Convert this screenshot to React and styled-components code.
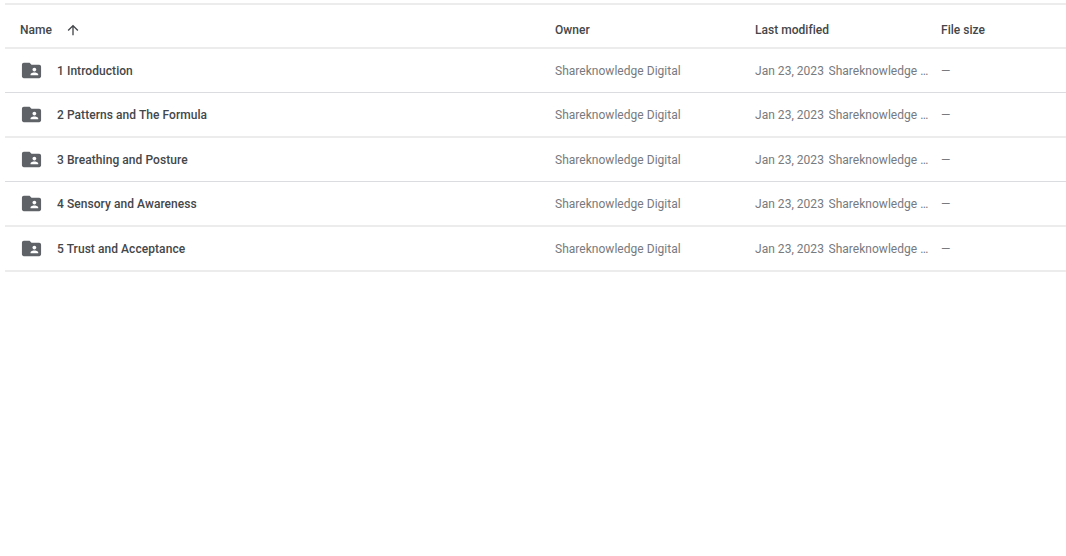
import React from "react";
import styled, { createGlobalStyle } from "styled-components";

const GlobalStyle = createGlobalStyle`
  html, body {
    margin: 0;
    padding: 0;
    background: #fff;
  }
  body {
    font-family: Roboto, "Liberation Sans", sans-serif;
  }
`;

const Page = styled.main`
  height: 556px;
  padding-top: 3px;
  box-sizing: border-box;
  overflow: hidden;
`;

const Table = styled.section`
  margin-left: 5px;
  border-top: 2px solid #ececec;
`;

const Row = styled.div`
  display: grid;
  grid-template-columns: 550px 200px 186px 1fr;
  align-items: center;
  box-sizing: border-box;
  height: ${(p) => (p.$soft ? "45px" : "44px")};
  border-bottom: ${(p) => (p.$soft ? "2px solid #ececec" : "1px solid #dadce0")};
`;

const HeaderRow = styled(Row)`
  height: 44px;
  padding-top: 7px;
`;

const HeaderCell = styled.div`
  display: flex;
  align-items: center;
  padding-left: ${(p) => (p.$first ? "15px" : "0")};
  font-size: 12px;
  font-weight: 500;
  letter-spacing: 0.03px;
  color: #44474a;
`;

const SortIcon = styled.svg`
  width: 16px;
  height: 16px;
  margin-left: 13px;
  fill: #44474a;
`;

const NameCell = styled.div`
  display: flex;
  align-items: center;
  padding-left: 15px;
  font-size: 12px;
  font-weight: 500;
  letter-spacing: 0.06px;
  color: #44474a;
`;

const FolderIcon = styled.svg`
  width: 23px;
  height: 23px;
  margin-right: 14px;
  fill: #5f6368;
`;

const MutedCell = styled.div`
  display: flex;
  font-size: 12px;
  letter-spacing: 0.03px;
  color: #777a7e;
`;

const ModifiedDate = styled.span`
  width: 73.5px;
  flex: none;
`;

const ModifiedBy = styled.span`
  width: 101px;
  overflow: hidden;
  white-space: nowrap;
  text-overflow: ellipsis;
`;

const folders = [
  { name: "1 Introduction", soft: false },
  { name: "2 Patterns and The Formula", soft: true },
  { name: "3 Breathing and Posture", soft: false },
  { name: "4 Sensory and Awareness", soft: true },
  { name: "5 Trust and Acceptance", soft: true },
];

const App = () => {
  return (
    <Page>
      <GlobalStyle />
      <Table>
        <HeaderRow $soft>
          <HeaderCell $first>
            Name
            <SortIcon viewBox="0 0 24 24">
              <path d="M4 12l1.41 1.41L11 7.83V20h2V7.83l5.58 5.59L20 12l-8-8-8 8z" />
            </SortIcon>
          </HeaderCell>
          <HeaderCell>Owner</HeaderCell>
          <HeaderCell>Last modified</HeaderCell>
          <HeaderCell>File size</HeaderCell>
        </HeaderRow>
        {folders.map(({ name, soft }) => (
          <Row key={name} $soft={soft}>
            <NameCell>
              <FolderIcon viewBox="0 0 24 24">
                <path d="M20 6h-8l-2-2H4c-1.1 0-1.99.9-1.99 2L2 18c0 1.1.9 2 2 2h16c1.1 0 2-.9 2-2V8c0-1.1-.9-2-2-2zm-5 3c1.1 0 2 .9 2 2s-.9 2-2 2-2-.9-2-2 .9-2 2-2zm4 8h-8v-1c0-1.33 2.67-2 4-2s4 .67 4 2v1z" />
              </FolderIcon>
              {name}
            </NameCell>
            <MutedCell>Shareknowledge Digital</MutedCell>
            <MutedCell>
              <ModifiedDate>Jan 23, 2023</ModifiedDate>
              <ModifiedBy>Shareknowledge Digital</ModifiedBy>
            </MutedCell>
            <MutedCell>—</MutedCell>
          </Row>
        ))}
      </Table>
    </Page>
  );
};

export default App;
